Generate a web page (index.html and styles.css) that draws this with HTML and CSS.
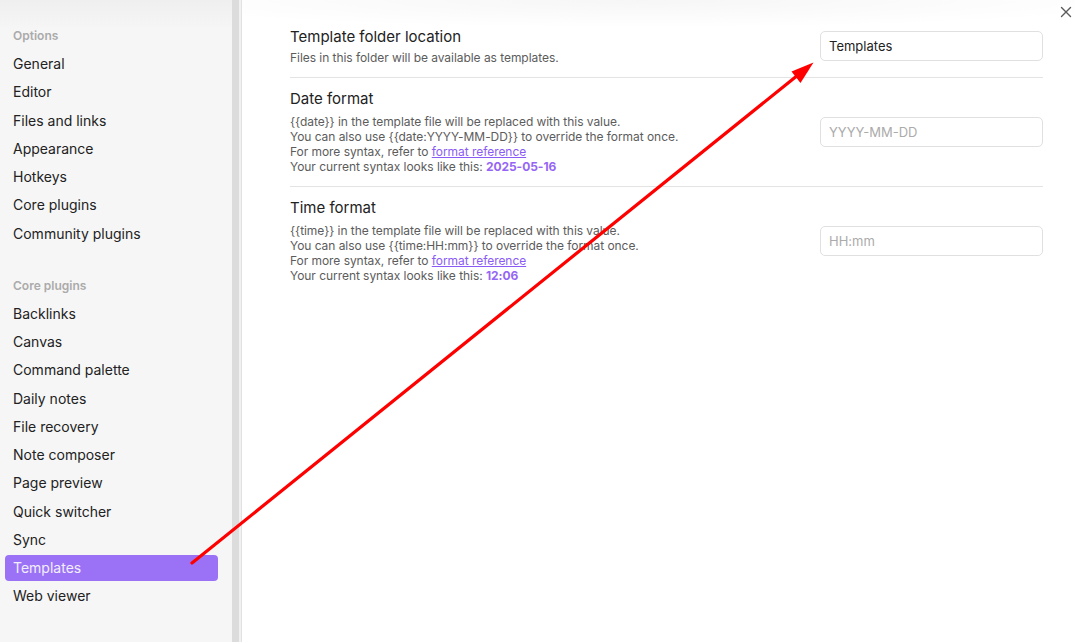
FILE: index.html
```html
<!DOCTYPE html>
<html>
<head>
<meta charset="utf-8">
<link rel="stylesheet" href="styles.css">
</head>
<body>
<div class="app">
  <aside class="sidebar">
    <nav class="nav">
      <div class="group">
        <div class="group-title">Options</div>
        <div class="item">General</div>
        <div class="item">Editor</div>
        <div class="item">Files and links</div>
        <div class="item">Appearance</div>
        <div class="item">Hotkeys</div>
        <div class="item">Core plugins</div>
        <div class="item">Community plugins</div>
      </div>
      <div class="group">
        <div class="group-title">Core plugins</div>
        <div class="item">Backlinks</div>
        <div class="item">Canvas</div>
        <div class="item">Command palette</div>
        <div class="item">Daily notes</div>
        <div class="item">File recovery</div>
        <div class="item">Note composer</div>
        <div class="item">Page preview</div>
        <div class="item">Quick switcher</div>
        <div class="item">Sync</div>
        <div class="item active">Templates</div>
        <div class="item">Web viewer</div>
      </div>
    </nav>
    <div class="scrollbar"></div>
    <div class="scroll-gap"></div>
  </aside>
  <main class="content">
    <div class="setting">
      <div class="info">
        <div class="name">Template folder location</div>
        <div class="desc first-desc">Files in this folder will be available as templates.</div>
      </div>
      <div class="control"><input class="field" type="text" value="Templates"></div>
    </div>
    <div class="setting">
      <div class="info">
        <div class="name">Date format</div>
        <div class="desc">{{date}} in the template file will be replaced with this value.<br>You can also use {{date:YYYY-MM-DD}} to override the format once.<br>For more syntax, refer to <a class="link" href="#">format reference</a><br>Your current syntax looks like this: <b class="sample">2025-05-16</b></div>
      </div>
      <div class="control"><input class="field" type="text" placeholder="YYYY-MM-DD"></div>
    </div>
    <div class="setting">
      <div class="info">
        <div class="name">Time format</div>
        <div class="desc">{{time}} in the template file will be replaced with this value.<br>You can also use {{time:HH:mm}} to override the format once.<br>For more syntax, refer to <a class="link" href="#">format reference</a><br>Your current syntax looks like this: <b class="sample">12:06</b></div>
      </div>
      <div class="control"><input class="field" type="text" placeholder="HH:mm"></div>
    </div>
    <div class="close" aria-label="Close">
      <svg width="12" height="12" viewBox="0 0 12 12"><path d="M1.5 1.5 L10.5 10.5 M10.5 1.5 L1.5 10.5" stroke="#5a5a5a" stroke-width="1.4" stroke-linecap="round"/></svg>
    </div>
  </main>
</div>
<svg class="annotation" width="1075" height="642" viewBox="0 0 1075 642">
  <line x1="192" y1="563" x2="798" y2="75" stroke="#ff0000" stroke-width="3.2" stroke-linecap="round"/>
  <polygon points="813.5,62.5 791.5,71.5 800.5,83" fill="#ff0000"/>
</svg>
</body>
</html>
```
FILE: styles.css
```css
html, body {
  margin: 0;
  padding: 0;
  width: 1075px;
  height: 642px;
  overflow: hidden;
  background: #fff;
  font-family: Inter, "Noto Sans", "Liberation Sans", sans-serif;
  color: #222;
}

.app {
  display: flex;
  height: 642px;
}

.sidebar {
  display: flex;
  flex: 0 0 auto;
  height: 100%;
  background: #f6f6f6;
}

.nav {
  width: 213px;
  padding: 28px 14px 0 5px;
  display: flex;
  flex-direction: column;
  gap: 29px;
  background: linear-gradient(180deg, #efefef 0, #f6f6f6 30px);
}

.group {
  display: flex;
  flex-direction: column;
}

.group-title {
  font-size: 12px;
  font-weight: 600;
  color: #ababab;
  padding: 0 8px;
  line-height: 16px;
  margin-bottom: 7px;
}

.item {
  font-size: 14px;
  line-height: 26px;
  height: 26px;
  padding: 0 8px;
  margin-bottom: 2.25px;
  border-radius: 4px;
  color: #222;
  white-space: nowrap;
}

.item.active {
  background: #9b72f5;
  color: #f3eeff;
}

.scrollbar {
  width: 7px;
  background: #dcdcdc;
}

.scroll-gap {
  width: 2px;
  background: #f1f1f1;
}

.content {
  position: relative;
  flex: 1;
  border-left: 1px solid #e2e2e2;
  padding: 17px 32px 0 48px;
  background: radial-gradient(ellipse 520px 28px at 48% 0, rgba(0,0,0,0.035), rgba(0,0,0,0));
}

.setting {
  display: flex;
  align-items: center;
  gap: 20px;
  padding: 11px 0 11.6px;
  border-top: 1px solid #e3e3e3;
}

.setting:first-child {
  border-top: none;
  padding: 10px 0 12px;
}

.info {
  flex: 1;
}

.name {
  font-size: 15px;
  line-height: 20px;
  color: #222;
}

.desc {
  font-size: 12px;
  line-height: 15px;
  letter-spacing: -0.05px;
  color: #5c5c5c;
  padding-top: 5px;
}

.desc.first-desc {
  padding-top: 3px;
  line-height: 15.4px;
}

.link {
  color: #8a5cf5;
  text-decoration: underline;
}

.sample {
  color: #9566f5;
  font-weight: 700;
}

.control {
  flex: 0 0 auto;
}

.field {
  box-sizing: border-box;
  width: 223px;
  height: 30px;
  border: 1px solid #e0e0e0;
  border-radius: 5px;
  padding: 0 8px;
  font-family: inherit;
  font-size: 13px;
  color: #222;
  background: #fff;
  outline: none;
}

.field::placeholder {
  color: #ababab;
}

.close {
  position: absolute;
  top: 6px;
  right: 3px;
  width: 12px;
  height: 12px;
  display: flex;
}

.annotation {
  position: absolute;
  left: 0;
  top: 0;
  pointer-events: none;
}
```
